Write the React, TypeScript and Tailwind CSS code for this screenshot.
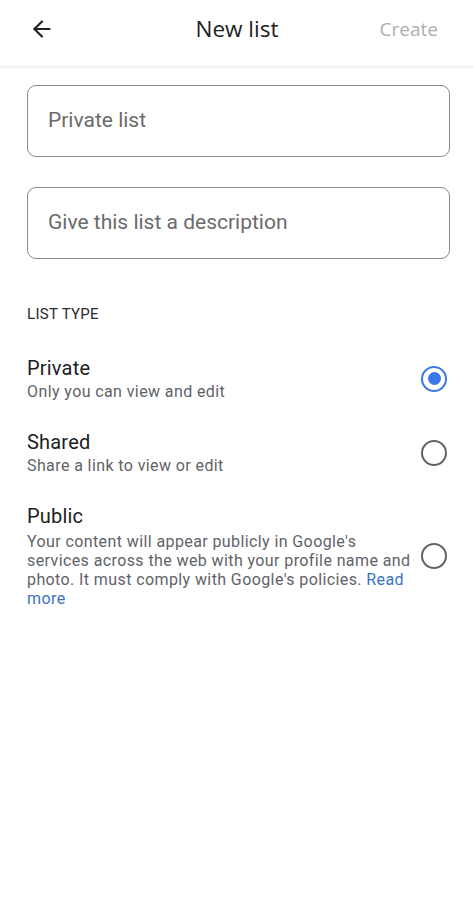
import { ArrowLeft } from 'lucide-react';

const options = [
  { id: 'private', title: 'Private', desc: 'Only you can view and edit', selected: true },
  { id: 'shared', title: 'Shared', desc: 'Share a link to view or edit', selected: false },
];

function Radio({ selected }: { selected: boolean }) {
  return selected ? (
    <div className="w-[26px] h-[26px] rounded-full border-[2.5px] border-[#3b78e7] flex items-center justify-center">
      <div className="w-[13px] h-[13px] rounded-full bg-[#3b78e7]" />
    </div>
  ) : (
    <div className="w-[26px] h-[26px] rounded-full border-[2.5px] border-[#5f6368]" />
  );
}

export default function App() {
  return (
    <div className="w-[474px] h-[900px] bg-white font-['Roboto',sans-serif] flex flex-col">
      {/* Header */}
      <header className="h-[66px] grid grid-cols-[1fr_auto_1fr] items-center px-[29px] pb-[8px] shadow-[0_1px_3px_rgba(0,0,0,0.12)]">
        <ArrowLeft className="w-[26px] h-[26px] text-[#202124]" strokeWidth={2} />
        <h1 className="text-center text-[22.5px] text-[#202124] font-['Open_Sans',sans-serif]">New list</h1>
        <span className="justify-self-end mr-[7px] text-[19px] text-[#aeaeae] font-['Open_Sans',sans-serif]">Create</span>
      </header>

      {/* Inputs */}
      <div className="pl-[27px] pr-[24px] pt-[19px] flex flex-col gap-[30px]">
        <div className="h-[72px] rounded-[9px] border border-[#8c8c8c] flex items-center px-[20px]">
          <span className="text-[21px] text-[#6b6b6b]">Private list</span>
        </div>
        <div className="h-[72px] rounded-[9px] border border-[#8c8c8c] flex items-center px-[20px]">
          <span className="text-[21px] text-[#6b6b6b]">Give this list a description</span>
        </div>
      </div>

      {/* List type */}
      <div className="pl-[27px] pr-[27px] pt-[44px]">
        <p className="text-[15px] text-[#2b2b2b] tracking-[0.3px]">LIST TYPE</p>
        <div className="mt-[30px] flex flex-col gap-[28px]">
          {options.map((o) => (
            <div key={o.id} className="flex items-center">
              <div className="flex-1">
                <p className="text-[20px] leading-[24px] text-[#202124] tracking-[0.2px]">{o.title}</p>
                <p className="mt-[2px] text-[16px] leading-[20px] text-[#5f6368] tracking-[0.4px]">{o.desc}</p>
              </div>
              <Radio selected={o.selected} />
            </div>
          ))}
          <div className="flex items-center">
            <div className="flex-1">
              <p className="text-[20px] leading-[24px] text-[#202124] tracking-[0.2px]">Public</p>
              <p className="mt-[4px] text-[16px] leading-[19px] text-[#5f6368] tracking-[0.4px] pr-[4px]">
                Your content will appear publicly in Google's services across the web with your profile
                name and photo. It must comply with Google's policies.{' '}
                <span className="text-[#3b73c4]">Read more</span>
              </p>
            </div>
            <Radio selected={false} />
          </div>
        </div>
      </div>
    </div>
  );
}
